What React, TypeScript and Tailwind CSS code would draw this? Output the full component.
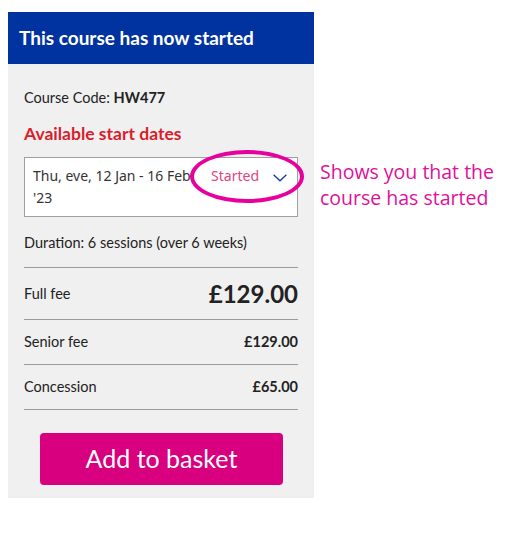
export default function App() {
  return (
    <div className="relative flex h-[539px] w-[530px] items-start bg-white pl-[8px] pt-[12px] font-['Lato',sans-serif]">
      <div className="w-[306px]">
        <div className="flex h-[52px] items-center bg-[#0033a0] px-[11px] text-[19px] font-bold text-white">
          This course has now started
        </div>

        <div className="bg-[#f0f0f0] px-4 pb-[13px] pt-[24px] text-[#222]">
          <p className="text-[14.5px] leading-[20px]">
            Course Code: <span className="font-bold">HW477</span>
          </p>
          <h3 className="mt-[15px] text-[17.5px] font-bold leading-[22px] text-[#d81e2d]">Available start dates</h3>

          <div className="relative mt-[12px] flex h-[60px] items-start border border-[#a0a0a0] bg-white pl-[8px] pr-[8px] pt-[7px] font-['Noto_Sans',sans-serif] text-[14px] leading-[22px] text-[#333]">
            <span className="w-[168px]">Thu, eve, 12 Jan - 16 Feb '23</span>
            <span className="ml-auto mr-[12px] text-[#e0457e]">Started</span>
            <svg viewBox="0 0 18 10" className="mt-[9px] h-[8px] w-[18px]" fill="none" stroke="#0a3f9e" strokeWidth="1.6">
              <path d="M1 1 L9 8.5 L17 1" />
            </svg>
            <div className="pointer-events-none absolute left-[165px] top-[-8px] h-[53px] w-[114px] rounded-[50%] border-[4px] border-[#e8009c]" />
          </div>

          <p className="mt-[16px] text-[14.5px] leading-[20px]">Duration: 6 sessions (over 6 weeks)</p>

          <div className="mt-[14px] border-t border-[#9a9a9a]">
            <div className="flex h-[52px] items-center justify-between border-b border-[#9a9a9a]">
              <span className="text-[14.5px]">Full fee</span>
              <span className="text-[24px] font-bold">£129.00</span>
            </div>
            <div className="flex h-[45px] items-center justify-between border-b border-[#9a9a9a]">
              <span className="text-[14.5px]">Senior fee</span>
              <span className="text-[14.5px] font-bold">£129.00</span>
            </div>
            <div className="flex h-[45px] items-center justify-between border-b border-[#9a9a9a]">
              <span className="text-[14.5px]">Concession</span>
              <span className="text-[14.5px] font-bold">£65.00</span>
            </div>
          </div>

          <button className="ml-4 mt-[23px] flex h-[52px] w-[243px] items-center justify-center rounded-[4px] bg-[#d8007f] text-[25px] text-white">
            Add to basket
          </button>
        </div>
      </div>

      <p className="ml-[6px] mt-[147px] font-['Open_Sans',sans-serif] text-[19.5px] leading-[26px] text-[#e0109a]">
        Shows you that the
        <br />
        course has started
      </p>
    </div>
  );
}
